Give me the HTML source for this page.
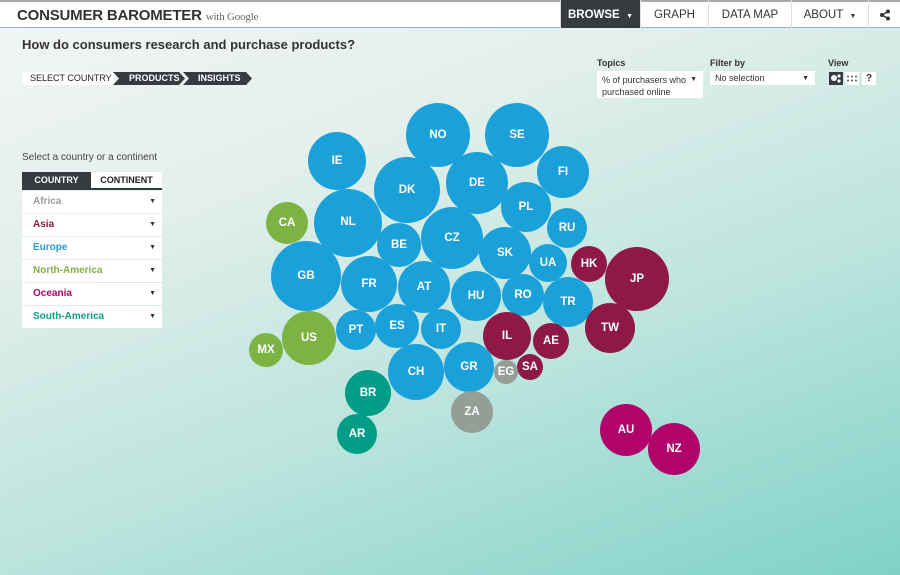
<!DOCTYPE html>
<html><head><meta charset="utf-8">
<style>
*{margin:0;padding:0;box-sizing:border-box}
body{width:900px;height:575px;overflow:hidden;font-family:"Liberation Sans",sans-serif;position:relative;
background:linear-gradient(160deg,#f3f6f4 0%,#e3efeb 30%,#bce4dd 62%,#7fd2c8 100%);}
.hdr{position:absolute;left:0;top:0;width:900px;height:28px;background:#fff;border-top:2px solid #aaa;border-bottom:1px solid #8fb6d4}
.logo{position:absolute;left:17px;top:5px;font-weight:bold;font-size:15px;color:#333;letter-spacing:-0.2px}
.logo span{font-family:"Liberation Serif",serif;font-weight:normal;font-size:11px;color:#666;margin-left:4px}
.nav{position:absolute;top:-2px;height:28px;font-size:11.5px;color:#333;line-height:30px;text-align:center;border-left:1px solid #ddd}
.q{position:absolute;left:22px;top:37px;font-size:13px;color:#333;font-weight:bold}
.crumb{position:absolute;top:72px;height:13px;font-size:9px;line-height:13px;font-weight:bold}
.lbl{position:absolute;font-size:9px;font-weight:bold;color:#333}
.sel{position:absolute;background:#fff;font-size:9px;color:#333;padding:3px 5px;line-height:13px}
.arr{position:absolute;right:6px;top:3px;font-size:7px}
.side{position:absolute;left:22px;width:140px}
.row{height:22px;background:#fff;margin-bottom:1px;font-size:10px;font-weight:bold;line-height:22px;padding-left:11px;position:relative}
.row i{position:absolute;right:6px;font-style:normal;font-size:7px;color:#333}
svg text{font-family:"Liberation Sans",sans-serif;font-weight:bold;fill:#fff;text-anchor:middle;dominant-baseline:central}
</style></head><body>
<div class="hdr">
<div class="logo">CONSUMER BAROMETER<span>with Google</span></div>
<div class="nav" style="left:560px;width:80px;background:#363b40;color:#fff;font-weight:bold">BROWSE &nbsp;<span style="font-size:7px">▼</span></div>
<div class="nav" style="left:640px;width:68px">GRAPH</div>
<div class="nav" style="left:708px;width:83px">DATA MAP</div>
<div class="nav" style="left:791px;width:77px">ABOUT &nbsp;<span style="font-size:7px">▼</span></div>
<div class="nav" style="left:868px;width:32px">
<svg width="12" height="12" viewBox="0 0 12 12" style="margin-top:9px"><circle cx="9" cy="2.5" r="2" fill="#333"/><circle cx="3" cy="6" r="2" fill="#333"/><circle cx="9" cy="9.5" r="2" fill="#333"/><path d="M3 6L9 2.5M3 6L9 9.5" stroke="#333" stroke-width="1.4"/></svg></div>
</div>
<div class="q">How do consumers research and purchase products?</div>
<div class="crumb" style="left:22px;width:92px;background:#fff;color:#222;padding-left:8px;font-weight:normal">SELECT COUNTRY</div>
<svg style="position:absolute;left:113px;top:72px" width="140" height="13"><polygon points="0,0 66,0 72,6.5 66,13 0,13 6,6.5" fill="#363b40"/><polygon points="70,0 133,0 139,6.5 133,13 70,13 76,6.5" fill="#363b40"/></svg>
<div class="crumb" style="left:129px;color:#fff">PRODUCTS</div>
<div class="crumb" style="left:198px;color:#fff">INSIGHTS</div>

<div class="lbl" style="left:597px;top:58px">Topics</div>
<div class="sel" style="left:597px;top:71px;width:106px;height:27px;line-height:12px">% of purchasers who purchased online<span class="arr">▼</span></div>
<div class="lbl" style="left:710px;top:58px">Filter by</div>
<div class="sel" style="left:710px;top:71px;width:105px;height:14px;padding-top:1px;line-height:12px">No selection<span class="arr" style="top:2px">▼</span></div>
<div class="lbl" style="left:828px;top:58px">View</div>
<div style="position:absolute;left:829px;top:72px;width:14px;height:13px;background:#363b40"><svg width="14" height="13"><circle cx="5" cy="6" r="3" fill="#fff"/><circle cx="10" cy="4" r="1.6" fill="#fff"/><circle cx="10" cy="9" r="1.6" fill="#fff"/></svg></div>
<div style="position:absolute;left:845px;top:72px;width:14px;height:13px;background:#fff"><svg width="14" height="13"><g fill="#555"><circle cx="3" cy="4.5" r="1"/><circle cx="7" cy="4.5" r="1"/><circle cx="11" cy="4.5" r="1"/><circle cx="3" cy="8.5" r="1"/><circle cx="7" cy="8.5" r="1"/><circle cx="11" cy="8.5" r="1"/></g></svg></div>
<div style="position:absolute;left:862px;top:72px;width:14px;height:13px;background:#fff;font-size:10px;font-weight:bold;text-align:center;line-height:13px;color:#333">?</div>

<div style="position:absolute;left:22px;top:152px;font-size:10px;color:#444">Select a country or a continent</div>
<div class="side" style="top:172px;height:18px;background:#fff;border-bottom:2px solid #363b40">
<div style="position:absolute;left:0;top:0;width:69px;height:16px;background:#363b40;color:#fff;font-size:9px;font-weight:bold;text-align:center;line-height:17px">COUNTRY</div>
<div style="position:absolute;left:69px;top:0;width:71px;height:16px;color:#222;font-size:9px;font-weight:bold;text-align:center;line-height:17px">CONTINENT</div>
</div>
<div class="side" style="top:191px">
<div class="row" style="color:#959e99">Africa<i>▼</i></div>
<div class="row" style="color:#8e1846">Asia<i>▼</i></div>
<div class="row" style="color:#2b9ad8">Europe<i>▼</i></div>
<div class="row" style="color:#7cb342">North-America<i>▼</i></div>
<div class="row" style="color:#b0046a">Oceania<i>▼</i></div>
<div class="row" style="color:#139e87">South-America<i>▼</i></div>
</div>

<svg style="position:absolute;left:0;top:0" width="900" height="575" font-size="11.5">
<g fill="#1ba1d9">
<circle cx="438" cy="135" r="32"/><circle cx="517" cy="135" r="32"/><circle cx="337" cy="161" r="29"/>
<circle cx="563" cy="172" r="26"/><circle cx="407" cy="190" r="33"/><circle cx="477" cy="183" r="31"/>
<circle cx="526" cy="207" r="25"/><circle cx="348" cy="223" r="34"/><circle cx="399" cy="245" r="22"/>
<circle cx="452" cy="238" r="31"/><circle cx="567" cy="228" r="20"/><circle cx="505" cy="253" r="26"/>
<circle cx="548" cy="263" r="19"/><circle cx="306" cy="276" r="35"/><circle cx="369" cy="284" r="28"/>
<circle cx="424" cy="287" r="26"/><circle cx="476" cy="296" r="25"/><circle cx="523" cy="295" r="21"/>
<circle cx="568" cy="302" r="25"/><circle cx="356" cy="330" r="20"/><circle cx="397" cy="326" r="22"/>
<circle cx="441" cy="329" r="20"/><circle cx="416" cy="372" r="28"/><circle cx="469" cy="367" r="25"/>
</g>
<g fill="#8e1846"><circle cx="589" cy="264" r="18"/><circle cx="637" cy="279" r="32"/><circle cx="610" cy="328" r="25"/>
<circle cx="507" cy="336" r="24"/><circle cx="551" cy="341" r="18"/><circle cx="530" cy="367" r="13"/></g>
<g fill="#7cb342"><circle cx="287" cy="223" r="21"/><circle cx="309" cy="338" r="27"/><circle cx="266" cy="350" r="17"/></g>
<g fill="#009e87"><circle cx="368" cy="393" r="23"/><circle cx="357" cy="434" r="20"/></g>
<g fill="#939e96"><circle cx="506" cy="372" r="12"/><circle cx="472" cy="412" r="21"/></g>
<g fill="#b0046a"><circle cx="626" cy="430" r="26"/><circle cx="674" cy="449" r="26"/></g>
<text x="438" y="135">NO</text><text x="517" y="135">SE</text><text x="337" y="161">IE</text>
<text x="563" y="172">FI</text><text x="407" y="190">DK</text><text x="477" y="183">DE</text>
<text x="526" y="207">PL</text><text x="348" y="222">NL</text><text x="399" y="245">BE</text>
<text x="452" y="238">CZ</text><text x="567" y="228">RU</text><text x="505" y="253">SK</text>
<text x="548" y="263">UA</text><text x="306" y="276">GB</text><text x="369" y="284">FR</text>
<text x="424" y="287">AT</text><text x="476" y="296">HU</text><text x="523" y="295">RO</text>
<text x="568" y="302">TR</text><text x="356" y="330">PT</text><text x="397" y="326">ES</text>
<text x="441" y="329">IT</text><text x="416" y="372">CH</text><text x="469" y="367">GR</text>
<text x="589" y="264">HK</text><text x="637" y="279">JP</text><text x="610" y="328">TW</text>
<text x="507" y="336">IL</text><text x="551" y="341">AE</text><text x="530" y="367">SA</text>
<text x="287" y="223">CA</text><text x="309" y="338">US</text><text x="266" y="350">MX</text>
<text x="368" y="393">BR</text><text x="357" y="434">AR</text><text x="506" y="372">EG</text>
<text x="472" y="412">ZA</text><text x="626" y="430">AU</text><text x="674" y="449">NZ</text>
</svg>
</body></html>
